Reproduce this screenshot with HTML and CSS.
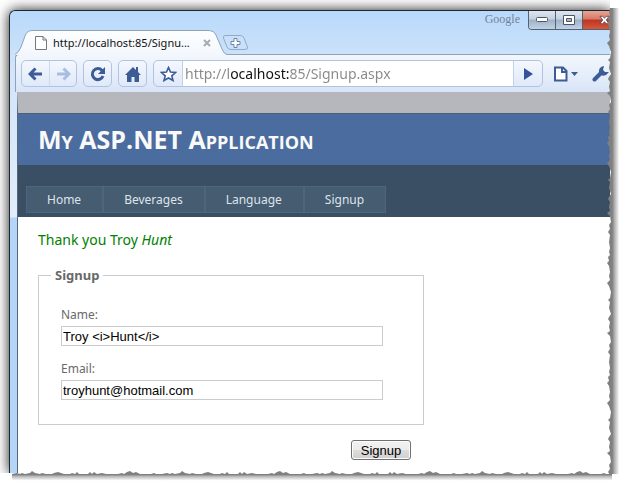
FILE: index.html
```html
<!DOCTYPE html>
<html lang="en">
<head>
    <meta charset="UTF-8">
    <meta name="viewport" content="width=device-width, initial-scale=1.0">
    <title>Signup</title>
    <link rel="stylesheet" href="styles.css">
</head>
<body>
    <div class="sheet">
        <div class="window">
            <div class="titlebar">
                <div class="tab">
                    <svg class="tab-shape" width="212" height="25" viewBox="0 0 212 25">
                        <defs>
                            <linearGradient id="tabFill" x1="0" y1="0" x2="0" y2="1">
                                <stop offset="0" stop-color="#fdfeff"/>
                                <stop offset="1" stop-color="#f3f7fd"/>
                            </linearGradient>
                        </defs>
                        <path d="M0 25 Q4 23 6 17 L10 6 Q12 .5 17 .5 L193 .5 Q199 .5 201 5 L207 19 Q209 24 212 24.500 L212 25 Z" fill="url(#tabFill)"/>
                        <path d="M0 24.500 Q4 22 6 17 L10 6 Q12 .5 17 .5 L193 .5 Q199 .5 201 5 L207 19 Q209 24 212 24.500" fill="none" stroke="#8fa3b8"/>
                    </svg>
                    <svg class="tab-icon" width="12" height="14" viewBox="0 0 12 14"><path d="M.5 .5H8L11.500 4V13.500H.5ZM8 .5V4H11.500" fill="#fff" stroke="#777"/></svg>
                    <span class="tab-title">http://localhost:85/Signu...</span>
                    <button class="tab-close" aria-label="Close tab"><svg width="8" height="8" viewBox="0 0 8 8"><path d="M1 1L7 7M7 1L1 7" stroke="#a5abb2" stroke-width="2"/></svg></button>
                </div>
                <button class="new-tab" aria-label="New tab">
                    <svg width="27" height="15" viewBox="0 0 27 15">
                        <path d="M3 .5H18Q21 .5 22 3L25.500 12Q26 14.500 23 14.500H9Q6 14.500 5 12L1.500 3Q1 .5 3 .5Z" fill="#c9e0fa" stroke="#93abc6"/>
                        <path d="M12 3.500H15V6.500H18V9.500H15V12.500H12V9.500H9V6.500H12Z" fill="#fff" stroke="#6b84a6"/>
                    </svg>
                </button>
                <span class="brand">Google</span>
                <div class="caption">
                    <button aria-label="Minimize"><svg width="12" height="6" viewBox="0 0 12 6"><rect x=".5" y=".5" width="11" height="4" rx="1" fill="#fff" stroke="#4d5562"/></svg></button>
                    <button aria-label="Maximize"><svg width="12" height="10" viewBox="0 0 12 10"><path d="M.5 .5H11.500V9.500H.5ZM3.500 3.500V6.500H8.500V3.500Z" fill="#fff" fill-rule="evenodd" stroke="#4d5562"/></svg></button>
                    <button class="close" aria-label="Close"><svg width="12" height="10" viewBox="0 0 12 10"><path d="M1 1H4L6 3L8 1H11L8 5L11 9H8L6 7L4 9H1L4 5Z" fill="#fff" stroke="#5d4a50"/></svg></button>
                </div>
            </div>

            <div class="toolbar">
                <div class="group">
                    <button aria-label="Back"><svg width="15" height="14" viewBox="0 0 15 14"><path d="M14 7H3M7.500 1.500L2 7L7.500 12.500" fill="none" stroke="#3d5c97" stroke-width="3"/></svg></button>
                    <button aria-label="Forward"><svg width="15" height="14" viewBox="0 0 15 14"><path d="M1 7H12M7.500 1.500L13 7L7.500 12.500" fill="none" stroke="#a9bde2" stroke-width="3"/></svg></button>
                </div>
                <div class="group">
                    <button aria-label="Reload"><svg width="16" height="16" viewBox="0 0 16 16"><path d="M12 4.500A5.500 5.500 0 1 0 13 10" fill="none" stroke="#3d5c97" stroke-width="3"/><path d="M15 1V8H8Z" fill="#3d5c97"/></svg></button>
                </div>
                <div class="group">
                    <button aria-label="Home"><svg width="16" height="16" viewBox="0 0 16 16"><path d="M8 1L11 4V1H13V6L16 9H14V16H9.500V11H6.500V16H2V9H0Z" fill="#3d5c97"/></svg></button>
                </div>
                <div class="omnibox">
                    <button aria-label="Bookmark"><svg width="17" height="16" viewBox="0 0 17 16"><path d="M8.500 1.500L10.500 6L15.500 6.500L11.800 9.800L13 14.500L8.500 12L4 14.500L5.200 9.800L1.500 6.500L6.500 6Z" fill="#fff" stroke="#3d5c97" stroke-width="1.600"/></svg></button>
                    <input type="text" class="url" aria-label="Address" value="http://localhost:85/Signup.aspx">
                    <button aria-label="Go"><svg width="10" height="12" viewBox="0 0 10 12"><path d="M1 0L10 6L1 12Z" fill="#34549a"/></svg></button>
                </div>
                <button class="tool page-menu" aria-label="Page menu"><svg width="24" height="16" viewBox="0 0 24 16"><path d="M1 1.500H9L12.500 5V14.500H1ZM8 1.500V6H12.500" fill="#fff" stroke="#3d5c97" stroke-width="2"/><path d="M17 6H24L20.500 10Z" fill="#3d5c97"/></svg></button>
                <button class="tool" aria-label="Settings"><svg width="18" height="16" viewBox="0 0 18 16"><path d="M2.500 13.500L9 7" stroke="#3d5c97" stroke-width="4" stroke-linecap="round"/><path d="M12 0Q6 1 7 7Q9 11 14 9L17 6L13 6L11 4Z" fill="#3d5c97"/></svg></button>
            </div>

            <div class="page">
                <div class="header">
                    <h1>My ASP.NET Application</h1>
                </div>
                <div class="menu">
                    <a href="#">Home</a>
                    <a href="#">Beverages</a>
                    <a href="#">Language</a>
                    <a href="#">Signup</a>
                </div>
                <form class="main">
                    <p class="message">Thank you Troy <i>Hunt</i></p>
                    <fieldset>
                        <legend>Signup</legend>
                        <label for="name">Name:</label>
                        <input type="text" id="name" value="Troy &lt;i&gt;Hunt&lt;/i&gt;">
                        <label for="email">Email:</label>
                        <input type="text" id="email" value="troyhunt@hotmail.com">
                    </fieldset>
                    <div class="submit">
                        <button type="button">Signup</button>
                    </div>
                </form>
            </div>
        </div>

        <svg class="torn-right" width="14" height="100%">
            <defs>
                <linearGradient id="fadeRight">
                    <stop offset="0.4" stop-color="#808080"/>
                    <stop offset="0.6" stop-color="#b4b4b4"/>
                    <stop offset="0.95" stop-color="#ffffff"/>
                </linearGradient>
                <pattern id="ripRight" width="14" height="120" patternUnits="userSpaceOnUse">
                    <path d="M4 0L3 4L4 7L2 9L3 13L1 15L3 18L4 24L3 28L4 32L1 35L3 38L5 44L4 50L2 52L4 54L3 60L5 66L3 69L2 71L4 74L3 79L4 83L1 85L4 88L5 94L3 97L4 101L2 104L4 107L3 114L4 120H14V0Z" fill="url(#fadeRight)"/>
                </pattern>
            </defs>
            <rect width="14" height="100%" fill="url(#ripRight)"/>
        </svg>
        <svg class="torn-bottom" height="11">
            <defs>
                <linearGradient id="fadeBottom" x1="0" y1="0" x2="0" y2="1">
                    <stop offset="0.3" stop-color="#808080"/>
                    <stop offset="0.45" stop-color="#b8b8b8"/>
                    <stop offset="0.8" stop-color="#ffffff"/>
                </linearGradient>
                <pattern id="ripBottom" width="150" height="12" patternUnits="userSpaceOnUse">
                    <path d="M0 3L5 2L8 3L10 2L13 3L18 2L20 0L23 2L28 3L30 2L34 3L40 3L42 2L46 1L52 3L58 3L60 2L63 3L65 1L67 3L72 3L76 3L78 1L80 3L82 1L85 3L90 2L94 3L100 3L106 3L110 2L112 3L115 1L118 0L121 2L124 1L128 3L134 3L139 3L142 2L144 3L150 3V12H0Z" fill="url(#fadeBottom)"/>
                </pattern>
            </defs>
            <rect width="100%" height="12" fill="url(#ripBottom)"/>
        </svg>
    </div>
</body>
</html>
```
FILE: styles.css
```css
* {
    box-sizing: border-box;
}

body {
    margin: 0;
    background: #fff;
    font-family: "Noto Sans", "Open Sans", sans-serif;
    color: #696969;
}

button {
    padding: 0;
    border: none;
    background: none;
    display: flex;
    align-items: center;
    justify-content: center;
}

.sheet {
    position: relative;
    padding: 10px 10px 9px 9px;
    overflow: hidden;
}

/* the shadow falls on the top and left side only, the other two are torn */
.window {
    border-top: 1px solid #20262e;
    border-left: 1px solid #20262e;
    border-top-left-radius: 6px;
    padding-left: 5px;
    background: linear-gradient(to bottom, #b8d9fb 0, #d2e5fa 60px, #e2edfa 206px, #b5d5f8 207px);
    box-shadow: 0 0 13px rgba(0, 0, 0, 0.9);
    clip-path: inset(-10px 0 0 -10px);
}

.titlebar {
    display: flex;
    align-items: flex-end;
    height: 43px;
}

.tab {
    position: relative;
    display: flex;
    align-items: center;
    width: 212px;
    height: 25px;
    margin-bottom: -1px;
    padding: 0 13px 0 20px;
}

.tab-shape {
    position: absolute;
    left: 0;
    top: 0;
}

.tab-icon, .tab-title, .tab-close {
    position: relative;
}

.tab-title {
    flex: 1;
    margin-left: 6px;
    font-size: 11px;
    line-height: 16px;
    white-space: nowrap;
    color: #111;
}

.tab-close {
    margin-right: 3px;
}

.new-tab {
    margin-left: -5px;
    margin-bottom: 4px;
}

.brand {
    align-self: flex-start;
    margin-left: auto;
    margin-right: 8px;
    font-family: "Liberation Serif", serif;
    font-size: 12px;
    line-height: 16px;
    color: #74839a;
}

.caption {
    align-self: flex-start;
    display: flex;
    border-left: 1px solid #56616f;
    border-bottom: 1px solid #56616f;
    border-bottom-left-radius: 4px;
    overflow: hidden;
}

.caption button {
    width: 27px;
    height: 18px;
    border-right: 1px solid #56616f;
    background: linear-gradient(to bottom, #dde7f2 0, #c3d0df 45%, #9fb1c6 50%, #bfd2e6 100%);
}

.caption .close {
    padding-left: 16px;
    border-right: none;
    background: linear-gradient(to bottom, #e8a597 0, #d77866 45%, #bf3520 50%, #d3583c 100%);
}

.toolbar {
    display: flex;
    align-items: center;
    gap: 6px;
    height: 38px;
    padding-left: 5px;
    border-left: 1px solid #8fa3b8;
    border-top: 1px solid #8fa3b8;
    border-top-left-radius: 4px;
    background: linear-gradient(to bottom, #f3f7fd, #d8e5f7);
}

.group, .omnibox {
    display: flex;
    height: 27px;
    border: 1px solid #b3c2e2;
    border-radius: 5px;
    background: linear-gradient(to bottom, #f4f8fe, #dfe9f8);
    overflow: hidden;
}

.group button {
    width: 27px;
}

.group button + button {
    border-left: 1px solid #cfdaee;
}

.omnibox {
    flex: 1;
    min-width: 0;
}

.omnibox button {
    width: 28px;
    flex-shrink: 0;
}

/* the host name is darker than the rest of the address */
.url {
    flex: 1;
    min-width: 0;
    padding: 0 2px;
    border: 1px solid #c5d0e8;
    border-width: 0 1px;
    font-family: "Noto Sans", "Open Sans", sans-serif;
    font-size: 14px;
    color: transparent;
    background:
        linear-gradient(to right, #888 47px, #111 47px, #111 107px, #888 107px) text,
        #fff;
}

.tool {
    flex-shrink: 0;
}

.page-menu {
    margin: 0 8px 0 5px;
}

.page {
    border-left: 1px solid #54687f;
    margin-left: 2px;
    border-top: 21px solid #b6b7bc;
    background: #fff;
}

.header {
    padding: 10px 20px;
    border-top: 1px solid #496077;
    background: #4b6c9e;
}

h1 {
    margin: 0;
    font-family: "Open Sans", "Noto Sans", sans-serif;
    font-size: 25px;
    font-weight: 700;
    font-variant: small-caps;
    line-height: 31px;
    color: #f9f9f9;
}

.menu {
    display: flex;
    padding: 21px 8px 4px;
    background: #3a4f63;
}

.menu a {
    padding: 4px 21px 4px 20px;
    border: 1px solid #4e667d;
    background: #465c71;
    font-size: 12px;
    line-height: 17px;
    color: #dde4ec;
    text-decoration: none;
}

.main {
    padding: 12px 20px 13px;
}

.message {
    margin: 0 0 14px;
    font-size: 14px;
    line-height: 22px;
    color: green;
}

fieldset {
    width: 386px;
    margin: 0;
    padding: 19px 22px 24px;
    border: 1px solid #ccc;
}

legend {
    margin-left: -10px;
    padding: 0 4px;
    font-size: 13px;
    font-weight: 700;
    line-height: 20px;
}

label {
    display: block;
    font-size: 12px;
    line-height: 22px;
}

fieldset input {
    display: block;
    width: 322px;
    height: 20px;
    margin-bottom: 12px;
    padding: 0 1px;
    border: 1px solid #ccc;
    font-family: "Liberation Sans", Arial, sans-serif;
    font-size: 13px;
    color: #000;
}

fieldset input:last-child {
    margin-bottom: 0;
}

.submit {
    display: flex;
    justify-content: flex-end;
    width: 373px;
    margin-top: 15px;
}

.submit button {
    width: 60px;
    height: 20px;
    border: 1px solid #707070;
    border-radius: 3px;
    box-shadow: inset 0 0 0 1px #fcfcfc;
    background: linear-gradient(to bottom, #f2f2f2 0, #ebebeb 50%, #ddd 50%, #cfcfcf 100%);
    font-family: "Liberation Sans", Arial, sans-serif;
    font-size: 13px;
    color: #000;
}

.torn-right {
    position: absolute;
    top: 8px;
    right: 0;
    height: calc(100% - 16px);
}

.torn-bottom {
    position: absolute;
    left: 12px;
    bottom: 0;
    width: calc(100% - 20px);
}
```
